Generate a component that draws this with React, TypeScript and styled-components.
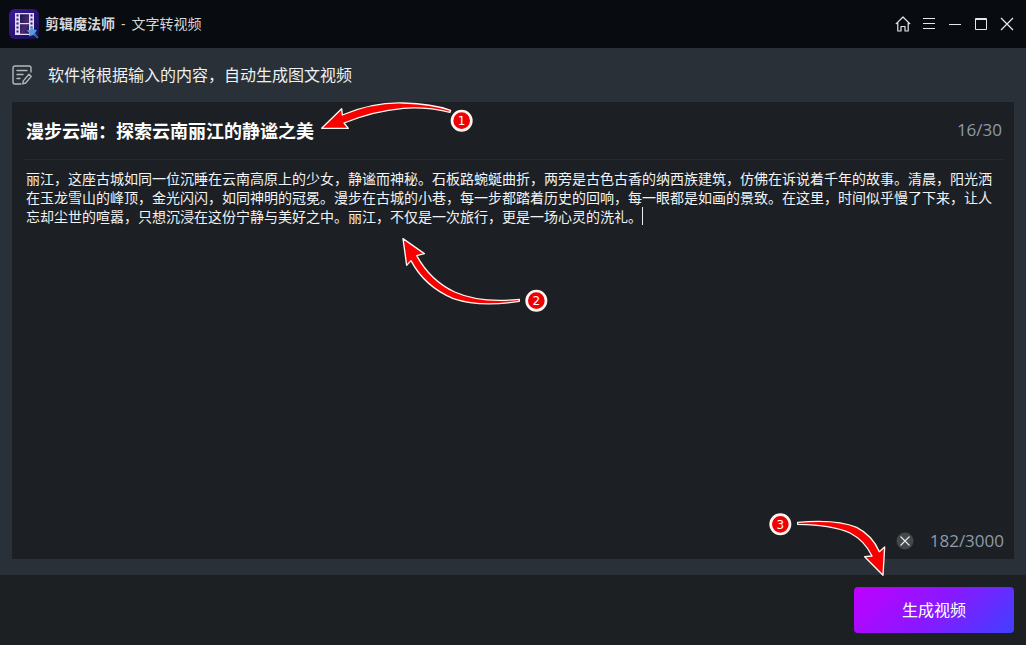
import React, { useState } from 'react';
import styled, { createGlobalStyle } from 'styled-components';

const GlobalStyle = createGlobalStyle`
  *, *::before, *::after { box-sizing: border-box; }
  body {
    margin: 0;
    background: #2a3037;
    color: #fff;
    font-family: 'Open Sans', 'Noto Sans CJK SC', sans-serif;
  }
  button, input, textarea { font-family: inherit; }
`;

const Page = styled.div`
  position: relative;
  min-height: 100vh;
  display: flex;
  flex-direction: column;
`;

const TitleBar = styled.header`
  height: 48px;
  padding: 0 11px 0 8px;
  display: flex;
  align-items: center;
  background: #080b0f;
`;

const Brand = styled.h1`
  flex: 1;
  display: flex;
  gap: 6px;
  margin: 0 0 0 5px;
  font-size: 14px;
  line-height: 20px;
  font-weight: 400;
  color: #d4d6d8;
`;

const BrandName = styled.strong`
  font-weight: 700;
`;

const WindowControls = styled.div`
  display: flex;
  align-items: center;
  gap: 10px;
`;

const IconButton = styled.button`
  display: flex;
  padding: 0;
  border: 0;
  background: none;
  color: #e4e7ea;
  cursor: pointer;
`;

const Content = styled.main`
  flex: 1;
  display: flex;
  flex-direction: column;
  padding: 0 12px 16px;
`;

const Hint = styled.div`
  height: 54px;
  display: flex;
  align-items: center;
  gap: 16px;
  font-size: 16px;
  line-height: 24px;
  color: #eef0f2;
`;

const HintText = styled.p`
  margin: 0;
`;

const Editor = styled.section`
  flex: 1;
  display: flex;
  flex-direction: column;
  padding: 0 10px 0 12px;
  background: #1c2024;
`;

const TitleRow = styled.div`
  height: 58px;
  display: flex;
  align-items: center;
  padding: 0 2px 2px;
  border-bottom: 1px solid #262a30;
`;

const TitleInput = styled.input`
  flex: 1;
  min-width: 0;
  height: 28px;
  padding: 0;
  border: 0;
  outline: 0;
  background: transparent;
  color: #fff;
  font-size: 18px;
  font-weight: 700;
`;

const Counter = styled.span`
  font-size: 17px;
  line-height: 24px;
  color: #8f9aaa;
`;

const BodyField = styled.div`
  position: relative;
  flex: 1;
  display: flex;
  padding: 9px 10px 0 2px;
`;

const BodyInput = styled.textarea`
  flex: 1;
  padding: 0;
  border: 0;
  outline: 0;
  resize: none;
  overflow: hidden;
  background: transparent;
  color: #f2f4f6;
  font-size: 14px;
  line-height: 19px;
`;

const Caret = styled.span`
  position: absolute;
  left: 618px;
  top: 47px;
  width: 1px;
  height: 18px;
  background: #eceef0;
`;

const EditorFooter = styled.div`
  height: 36px;
  display: flex;
  align-items: center;
  justify-content: flex-end;
  gap: 16px;
`;

const Footer = styled.footer`
  height: 70px;
  display: flex;
  align-items: center;
  justify-content: flex-end;
  padding: 0 12px;
  background: #1c2023;
`;

const GenerateButton = styled.button`
  width: 160px;
  height: 46px;
  padding: 0 0 2px;
  border: 0;
  border-radius: 4px;
  background: linear-gradient(135deg, #c000ff 0%, #8a18ff 50%, #4040ff 100%);
  color: #fff;
  font-size: 16px;
  cursor: pointer;
`;

type Place = { $left?: number; $top?: number; $right?: number; $bottom?: number };

const Annotation = styled.svg<Place>`
  position: absolute;
  pointer-events: none;
  ${({ $left }) => $left !== undefined && `left: ${$left}px;`}
  ${({ $top }) => $top !== undefined && `top: ${$top}px;`}
  ${({ $right }) => $right !== undefined && `right: ${$right}px;`}
  ${({ $bottom }) => $bottom !== undefined && `bottom: ${$bottom}px;`}
`;

const Arrow = styled.path`
  fill: #f80000;
  stroke: #fff6f2;
  stroke-width: 4;
  stroke-linejoin: round;
`;

const BadgeText = styled.text`
  fill: #fff;
  font-family: 'DejaVu Sans', sans-serif;
  font-size: 36px;
  text-anchor: middle;
`;

function Badge({ x, y, n }: { x: number; y: number; n: number }) {
  return (
    <g>
      <circle cx={x} cy={y} r="29" fill="#f00000" stroke="#fff6f2" strokeWidth="8" />
      <BadgeText x={x} y={y + 13}>{n}</BadgeText>
    </g>
  );
}

function Logo() {
  return (
    <svg width="32" height="32" viewBox="0 0 32 32" aria-hidden="true">
      <defs>
        <linearGradient id="logo" x1="0" y1="0" x2="1" y2="1">
          <stop offset="0" stopColor="#3a1a9c" />
          <stop offset="0.5" stopColor="#2a1478" />
          <stop offset="1" stopColor="#16104c" />
        </linearGradient>
        <linearGradient id="frame" x1="0" y1="0" x2="1" y2="1">
          <stop offset="0" stopColor="#1c1848" />
          <stop offset="0.6" stopColor="#4a2a70" />
          <stop offset="1" stopColor="#241a5c" />
        </linearGradient>
      </defs>
      <rect x="1" y="1" width="30" height="30" rx="6" fill="url(#logo)" />
      <path
        fillRule="evenodd"
        d="M7 5h19v22H7zM12 6.500v8.500h9V6.500zM12 16.500V25.500h9v-9z"
        fill="#e2d8f4"
      />
      <path d="M12 6.500h9v8.500h-9zM12 16.500h9v9h-9z" fill="url(#frame)" />
      <path d="M9.500 6.500v20M23.500 6.500v20" stroke="#2a1a70" strokeWidth="2" strokeDasharray="2 2" />
      <path d="M24 18l1.500 3.500 3.500.5-2 3 3 4.500-5-2.500-4 1.500.5-3.500-3-2.500 3.500-.5z" fill="#5c9ae0" />
      <path d="M26 26l4 4" stroke="#2f62b0" strokeWidth="2" />
    </svg>
  );
}

function NoteIcon() {
  return (
    <svg width="20" height="20" viewBox="0 0 20 20" fill="none" stroke="#b4b9be" strokeWidth="1.4" strokeLinecap="round" strokeLinejoin="round" aria-hidden="true">
      <path d="M19 7V3a2 2 0 0 0-2-2H3a2 2 0 0 0-2 2v14a2 2 0 0 0 2 2h6M5 5.500h10M5 9.500h6M5 13.500h3" />
      <path d="M17 9.200l2.300 2.200-5.600 6.600-2.900.900.500-3z" />
    </svg>
  );
}

const App = () => {
  const [title, setTitle] = useState('漫步云端：探索云南丽江的静谧之美');
  const [body, setBody] = useState(
    '丽江，这座古城如同一位沉睡在云南高原上的少女，静谧而神秘。石板路蜿蜒曲折，两旁是古色古香的纳西族建筑，仿佛在诉说着千年的故事。清晨，阳光洒在玉龙雪山的峰顶，金光闪闪，如同神明的冠冕。漫步在古城的小巷，每一步都踏着历史的回响，每一眼都是如画的景致。在这里，时间似乎慢了下来，让人忘却尘世的喧嚣，只想沉浸在这份宁静与美好之中。丽江，不仅是一次旅行，更是一场心灵的洗礼。'
  );

  return (
    <>
      <GlobalStyle />
      <Page>
        <TitleBar>
          <Logo />
          <Brand>
            <BrandName>剪辑魔法师</BrandName>
            <span>-</span>
            <span>文字转视频</span>
          </Brand>
          <WindowControls>
            <IconButton aria-label="主页">
              <svg width="16" height="16" viewBox="0 0 16 16" fill="none" stroke="currentColor" strokeWidth="1.2" strokeLinejoin="round">
                <path d="M.8 8.200L8 1l7.200 7.200M2.800 6.800V15h3.200v-4.500h4V15h3.200V6.800" />
              </svg>
            </IconButton>
            <IconButton aria-label="菜单">
              <svg width="16" height="16" viewBox="0 0 16 16" stroke="currentColor">
                <path d="M2 2.500h12M2 7.500h12M2 12.500h12" />
              </svg>
            </IconButton>
            <IconButton aria-label="最小化">
              <svg width="16" height="16" viewBox="0 0 16 16" stroke="currentColor">
                <path d="M2 8.500h12" />
              </svg>
            </IconButton>
            <IconButton aria-label="最大化">
              <svg width="16" height="16" viewBox="0 0 16 16" fill="none" stroke="currentColor">
                <path d="M2.500 2.500h11v11h-11zM2 3.500h12" />
              </svg>
            </IconButton>
            <IconButton aria-label="关闭">
              <svg width="16" height="16" viewBox="0 0 16 16" stroke="currentColor" strokeWidth="1.3">
                <path d="M2 2l12 12M14 2L2 14" />
              </svg>
            </IconButton>
          </WindowControls>
        </TitleBar>

        <Content>
          <Hint>
            <NoteIcon />
            <HintText>软件将根据输入的内容，自动生成图文视频</HintText>
          </Hint>
          <Editor>
            <TitleRow>
              <TitleInput aria-label="标题" value={title} onChange={(e) => setTitle(e.target.value)} />
              <Counter>16/30</Counter>
            </TitleRow>
            <BodyField>
              <BodyInput aria-label="正文" spellCheck={false} value={body} onChange={(e) => setBody(e.target.value)} />
              <Caret />
            </BodyField>
            <EditorFooter>
              <IconButton aria-label="清空" onClick={() => setBody('')}>
                <svg width="18" height="18" viewBox="0 0 18 18">
                  <circle cx="9" cy="9" r="8.500" fill="#44484b" />
                  <path d="M4.500 4.500l9 9M13.500 4.500l-9 9" stroke="#e8eaec" strokeWidth="1.100" />
                </svg>
              </IconButton>
              <Counter>182/3000</Counter>
            </EditorFooter>
          </Editor>
        </Content>

        <Footer>
          <GenerateButton>生成视频</GenerateButton>
        </Footer>

        <Annotation $left={310} $top={90} width="180" height="60" viewBox="0 0 540 180">
          <Arrow d="M35 115L95 56L97 75Q190 36 280 39Q365 41 422 61L420 67Q350 50 280 55Q190 63 102 99L115 115Z" />
          <Badge x={455} y={92} n={1} />
        </Annotation>
        <Annotation $left={390} $top={230} width="170" height="90" viewBox="0 0 510 270">
          <Arrow d="M39 26L103 71L80 77Q122 153 194 186Q270 220 388 208L388 214Q270 233 190 206Q103 169 63 92L50 106Z" />
          <Badge x={439} y={212} n={2} />
        </Annotation>
        <Annotation $right={0} $bottom={0} width="266" height="145" viewBox="0 0 798 435">
          <Arrow d="M113 67Q230 57 290 82Q337 106 358 155L374 141L369 226L314 170L336 168Q313 121 270 99Q220 75 113 73Z" />
          <Badge x={61} y={73} n={3} />
        </Annotation>
      </Page>
    </>
  );
};

export default App;
